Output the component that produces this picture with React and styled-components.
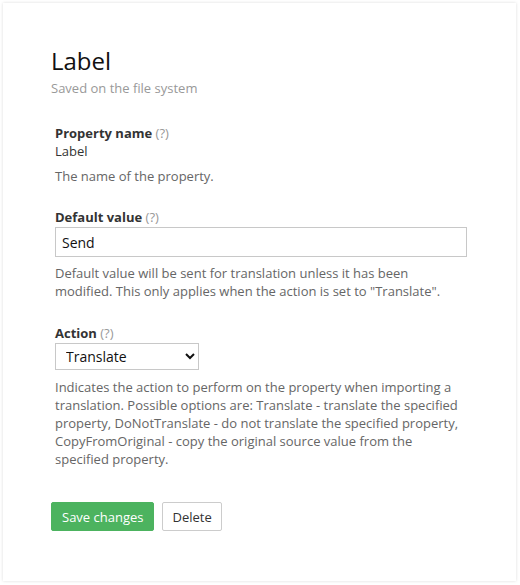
import React from "react";
import styled, { createGlobalStyle } from "styled-components";

const GlobalStyle = createGlobalStyle`
	body {
		margin: 0;
		background: #ffffff;
		font-family: "Open Sans", "Liberation Sans", sans-serif;
	}
`;

const Page = styled.div`
	padding: 3px 3px 4px 3px;
`;

const Card = styled.div`
	width: 513px;
	height: 578px;
	box-sizing: border-box;
	background: #fff;
	box-shadow: 0 0 3px rgba(0, 0, 0, 0.14);
	padding: 41px 48px 0 48px;
`;

const Title = styled.h1`
	margin: 0;
	font-size: 24px;
	font-weight: 400;
	line-height: 33px;
	color: #111;
`;

const Subtitle = styled.div`
	font-size: 13px;
	line-height: 18px;
	color: #999;
	margin-top: 2px;
`;

const Field = styled.div`
	padding-left: 4px;
	margin-top: ${(p) => p.$top}px;
`;

const FieldLabel = styled.div`
	font-size: 13px;
	font-weight: 700;
	line-height: 18px;
	color: #333;
`;

const Hint = styled.span`
	font-weight: 400;
	color: #999;
`;

const Value = styled.div`
	font-size: 13px;
	line-height: 18px;
	color: #333;
`;

const Help = styled.p`
	margin: ${(p) => p.$top || 4}px 0 0 0;
	font-size: 13px;
	line-height: 18px;
	color: #666;
	max-width: 412px;
`;

const TextInput = styled.input`
	display: block;
	width: 412px;
	height: 30px;
	box-sizing: border-box;
	margin-top: 1px;
	border: 1px solid #c8c8c8;
	padding: 0 6px;
	font-family: inherit;
	font-size: 14px;
	color: #111;
	outline: none;
`;

const Select = styled.select`
	display: block;
	width: 144px;
	height: 27px;
	box-sizing: border-box;
	margin-top: 1px;
	border: 1px solid #c8c8c8;
	border-radius: 0;
	padding: 0 0 0 6px;
	font-family: inherit;
	font-size: 14px;
	color: #111;
	background: #fff;
`;

const Actions = styled.div`
	display: flex;
	gap: 8px;
	margin-top: 34px;
`;

const Button = styled.button`
	height: 29px;
	box-sizing: border-box;
	padding: 0 ${(p) => (p.$primary ? 10 : 9)}px;
	font-family: inherit;
	font-size: 13px;
	border-radius: 2px;
	cursor: pointer;
	border: 1px solid ${(p) => (p.$primary ? "#4cb35f" : "#cccccc")};
	background: ${(p) => (p.$primary ? "#4cb35f" : "#fff")};
	color: ${(p) => (p.$primary ? "#fff" : "#333")};
`;

export default function App() {
	return (
		<Page>
			<GlobalStyle />
			<Card>
				<Title>Label</Title>
				<Subtitle>Saved on the file system</Subtitle>

				<Field $top={27}>
					<FieldLabel>
						Property name <Hint>(?)</Hint>
					</FieldLabel>
					<Value>Label</Value>
					<Help $top={7}>The name of the property.</Help>
				</Field>

				<Field $top={23}>
					<FieldLabel>
						Default value <Hint>(?)</Hint>
					</FieldLabel>
					<TextInput defaultValue="Send" />
					<Help $top={7}>
						Default value will be sent for translation unless it has been
						modified. This only applies when the action is set to "Translate".
					</Help>
				</Field>

				<Field $top={24}>
					<FieldLabel>
						Action <Hint>(?)</Hint>
					</FieldLabel>
					<Select defaultValue="Translate">
						<option>Translate</option>
						<option>DoNotTranslate</option>
						<option>CopyFromOriginal</option>
					</Select>
					<Help $top={8}>
						Indicates the action to perform on the property when importing a
						translation. Possible options are: Translate - translate the
						specified property, DoNotTranslate - do not translate the specified
						property, CopyFromOriginal - copy the original source value from the
						specified property.
					</Help>
				</Field>

				<Actions>
					<Button $primary>Save changes</Button>
					<Button>Delete</Button>
				</Actions>
			</Card>
		</Page>
	);
}
